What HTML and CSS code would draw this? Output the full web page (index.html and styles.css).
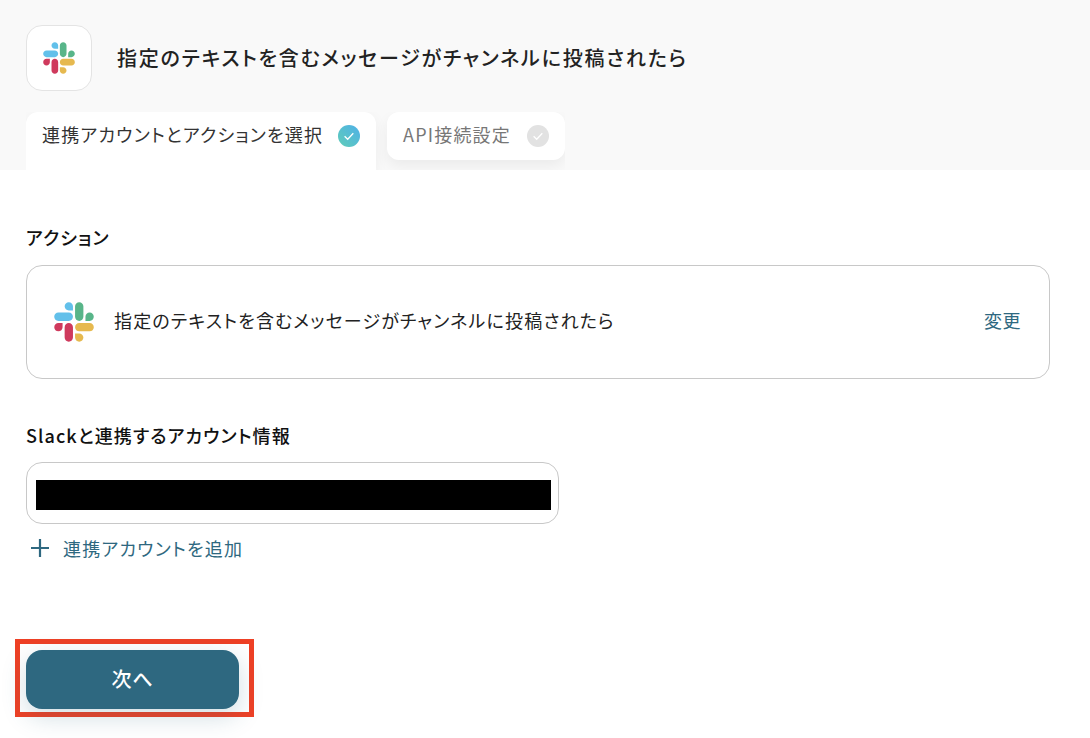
FILE: index.html
```html
<!DOCTYPE html>
<html lang="ja">
<head>
    <meta charset="UTF-8">
    <meta name="viewport" content="width=device-width, initial-scale=1.0">
    <title>Slack アクション設定</title>
    <link rel="stylesheet" href="styles.css">
</head>
<body>
    <svg class="sprite" aria-hidden="true">
        <symbol id="slack" viewBox="0 0 127 127">
            <path fill="#cf3a5d" d="M27.2 80c0 7.3-5.9 13.2-13.2 13.2C6.7 93.2.8 87.3.8 80c0-7.3 5.9-13.2 13.2-13.2h13.2V80zm6.6 0c0-7.3 5.9-13.2 13.2-13.2 7.3 0 13.2 5.9 13.2 13.2v33c0 7.3-5.9 13.2-13.2 13.2-7.3 0-13.2-5.9-13.2-13.2V80z"/>
            <path fill="#62c0ea" d="M47 27c-7.3 0-13.2-5.9-13.2-13.2C33.8 6.5 39.7.6 47 .6c7.3 0 13.2 5.9 13.2 13.2V27H47zm0 6.7c7.3 0 13.2 5.9 13.2 13.2 0 7.3-5.9 13.2-13.2 13.2H13.9C6.6 60.1.7 54.2.7 46.9c0-7.3 5.9-13.2 13.2-13.2H47z"/>
            <path fill="#58b589" d="M99.9 46.9c0-7.3 5.9-13.2 13.2-13.2 7.3 0 13.2 5.9 13.2 13.2 0 7.3-5.9 13.2-13.2 13.2H99.9V46.9zm-6.6 0c0 7.3-5.9 13.2-13.2 13.2-7.3 0-13.2-5.9-13.2-13.2V13.8C66.9 6.5 72.8.6 80.1.6c7.3 0 13.2 5.9 13.2 13.2v33.1z"/>
            <path fill="#e6b94f" d="M80.1 99.8c7.3 0 13.2 5.9 13.2 13.2 0 7.3-5.9 13.2-13.2 13.2-7.3 0-13.2-5.9-13.2-13.2V99.8h13.2zm0-6.6c-7.3 0-13.2-5.9-13.2-13.2 0-7.3 5.9-13.2 13.2-13.2h33.1c7.3 0 13.2 5.9 13.2 13.2 0 7.3-5.9 13.2-13.2 13.2H80.1z"/>
        </symbol>
        <linearGradient id="check-grad" x1="0" y1="1" x2="1" y2="0">
            <stop offset="0" stop-color="#5fcdb8"/>
            <stop offset="1" stop-color="#4fb0e8"/>
        </linearGradient>
    </svg>

    <header class="head">
        <div class="head-title">
            <div class="logo-box">
                <svg class="logo-small"><use href="#slack"/></svg>
            </div>
            <h1>指定のテキストを含むメッセージがチャンネルに投稿されたら</h1>
        </div>
        <div class="tabs">
            <div class="tab tab-active">
                <span>連携アカウントとアクションを選択</span>
                <svg class="check" viewBox="0 0 22 22"><circle cx="11" cy="11" r="11" fill="url(#check-grad)"/><path d="M6.6 11.2l3.1 3 5.6-6" fill="none" stroke="#fff" stroke-width="1.3"/></svg>
            </div>
            <div class="tab tab-idle">
                <span>API接続設定</span>
                <svg class="check" viewBox="0 0 22 22"><circle cx="11" cy="11" r="11" fill="#e2e2e2"/><path d="M6.6 11.2l3.1 3 5.6-6" fill="none" stroke="#fff" stroke-width="1.3"/></svg>
            </div>
        </div>
    </header>

    <main class="content">
        <h2 class="label">アクション</h2>
        <div class="action-card">
            <svg class="logo-large"><use href="#slack"/></svg>
            <span class="action-name">指定のテキストを含むメッセージがチャンネルに投稿されたら</span>
            <a class="change" href="#">変更</a>
        </div>

        <h2 class="label label-account">Slackと連携するアカウント情報</h2>
        <div class="account-field">
            <div class="masked"></div>
        </div>
        <a class="add-account" href="#">
            <svg class="plus" viewBox="0 0 18 18"><path d="M9 0v18M0 9h18" stroke="#2e6880" stroke-width="2.2" fill="none"/></svg>
            <span>連携アカウントを追加</span>
        </a>

        <div class="next-frame">
            <button class="next">次へ</button>
        </div>
    </main>
</body>
</html>
```

FILE: styles.css
```css
* {
    box-sizing: border-box;
}
body {
    margin: 0;
    height: 738px;
    overflow: hidden;
    background-color: #fff;
    color: #222;
    font-family: "Noto Sans CJK JP", "Noto Sans", sans-serif;
    font-feature-settings: "palt";
}
.sprite {
    position: absolute;
    width: 0;
    height: 0;
}
.head {
    height: 170px;
    padding: 25px 0 0 26px;
    background-color: #f9f9f9;
}
.head-title {
    display: flex;
    align-items: center;
    gap: 25px;
}
.logo-box {
    width: 66px;
    height: 66px;
    display: flex;
    justify-content: center;
    align-items: center;
    background-color: #fff;
    border: 1px solid #e4e4e4;
    border-radius: 16px;
}
.logo-small {
    width: 32px;
    height: 32px;
}
h1 {
    margin: 0 0 2px;
    font-size: 20px;
    font-weight: 500;
    letter-spacing: 1.8px;
    color: #222;
}
/* shadows stop at the strip's right edge, as in the tab bar */
.tabs {
    display: flex;
    gap: 11px;
    width: 539px;
    height: 58px;
    margin-top: 21px;
    overflow: hidden;
}
.tab {
    display: flex;
    justify-content: space-between;
    border-radius: 12px 12px 0 0;
    background-color: #fff;
    font-size: 18px;
    font-weight: 400;
    letter-spacing: 1.2px;
    line-height: 24px;
}
.tab-active {
    flex: none;
    width: 350px;
    height: 58px;
    padding: 10px 16px 0 16px;
    color: #333;
    box-shadow: 0 4px 14px rgba(0, 0, 0, 0.05);
}
.tab-idle {
    flex: none;
    width: 178px;
    height: 48px;
    padding: 10px 16px 0 16px;
    border-radius: 12px;
    color: #777;
    box-shadow: 0 6px 14px rgba(0, 0, 0, 0.06);
}
.check {
    width: 22px;
    height: 22px;
    margin-top: 3px;
}
.content {
    padding: 0 26px;
}
.label {
    margin: 0;
    font-size: 18px;
    font-weight: 500;
    line-height: 24px;
    letter-spacing: 1.1px;
    color: #111;
}
.content > .label:first-child {
    margin-top: 55px;
}
.action-card {
    display: flex;
    align-items: center;
    width: 1024px;
    height: 114px;
    margin-top: 16px;
    padding: 0 28px 0 27px;
    border: 1px solid #c8c8c8;
    border-radius: 16px;
}
.logo-large {
    width: 40px;
    height: 40px;
}
.action-name {
    flex: 1;
    margin: 0 0 5px 20px;
    font-size: 18px;
    letter-spacing: 1.16px;
    color: #222;
}
.change {
    margin-bottom: 5px;
    font-size: 18px;
    font-weight: 400;
    letter-spacing: 0.5px;
    color: #2e6880;
    text-decoration: none;
}
.label-account {
    margin-top: 44px;
}
.account-field {
    width: 533px;
    height: 62px;
    margin-top: 15px;
    padding: 17px 7px 0 9px;
    border: 1px solid #c8c8c8;
    border-radius: 16px;
}
.masked {
    height: 30px;
    background-color: #000;
}
.add-account {
    display: flex;
    align-items: center;
    gap: 14px;
    margin-top: 11px;
    padding-left: 5px;
    font-size: 18px;
    letter-spacing: 1.2px;
    color: #2e6880;
    text-decoration: none;
}
.plus {
    width: 18px;
    height: 18px;
}
.next-frame {
    width: 239px;
    height: 78px;
    margin: 78px 0 0 -11px;
    padding: 6px;
    border: 5px solid #ee4025;
}
.next {
    display: block;
    width: 213px;
    height: 59px;
    padding-bottom: 3px;
    border: none;
    border-radius: 16px;
    background-color: #2e6880;
    color: #fff;
    font-family: inherit;
    font-size: 20px;
    font-weight: 500;
    letter-spacing: 1px;
    box-shadow: 0 8px 24px rgba(46, 104, 128, 0.22);
}
```
